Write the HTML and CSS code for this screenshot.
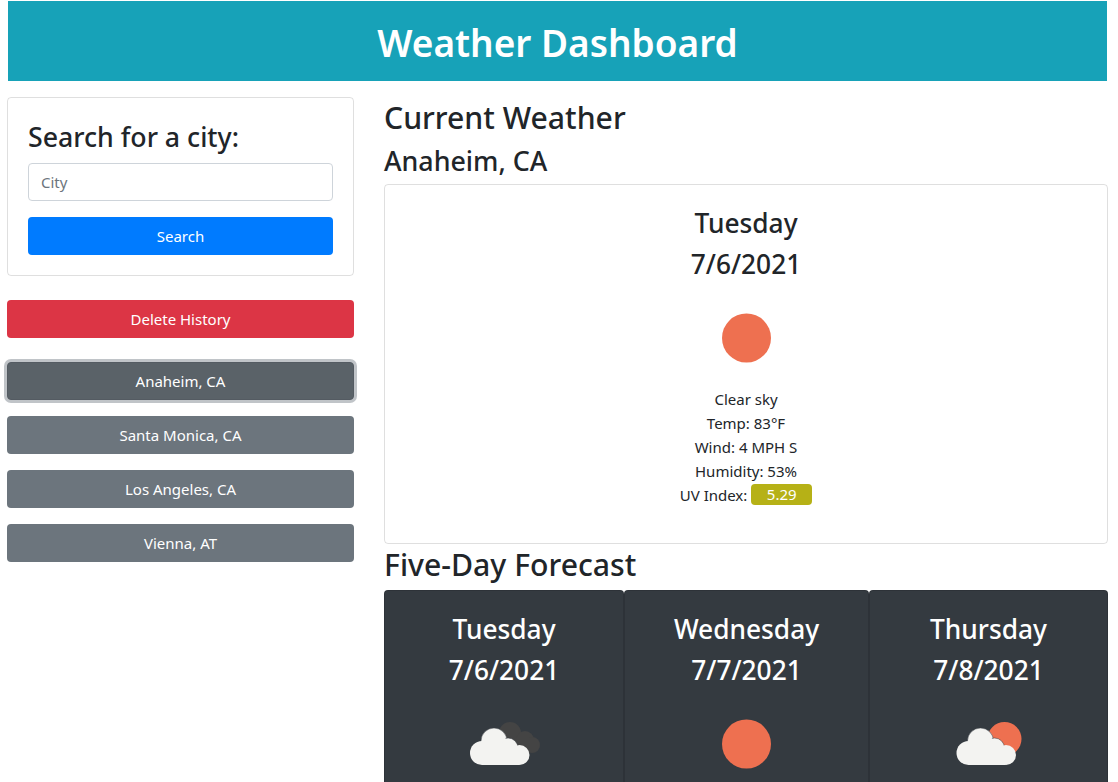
FILE: index.html
```html
<!DOCTYPE html>
<html lang="en">
<head>
  <meta charset="UTF-8">
  <title>Weather Dashboard</title>
  <link rel="stylesheet" href="styles.css">
</head>
<body>
  <header class="banner">
    <h1>Weather Dashboard</h1>
  </header>

  <div class="layout">
    <aside class="sidebar">
      <form class="search-card">
        <h3>Search for a city:</h3>
        <input type="text" class="city-input" placeholder="City">
        <button type="button" class="btn btn-blue">Search</button>
      </form>

      <button type="button" class="btn btn-red">Delete History</button>

      <div class="history">
        <button type="button" class="btn btn-grey is-focused">Anaheim, CA</button>
        <button type="button" class="btn btn-grey">Santa Monica, CA</button>
        <button type="button" class="btn btn-grey">Los Angeles, CA</button>
        <button type="button" class="btn btn-grey">Vienna, AT</button>
      </div>
    </aside>

    <main class="content">
      <h2 class="current-title">Current Weather</h2>
      <h3 class="city-name">Anaheim, CA</h3>
      <section class="weather-card">
        <h3>Tuesday</h3>
        <h3>7/6/2021</h3>
        <svg class="icon" viewBox="0 0 100 100">
          <circle cx="50.500" cy="50" r="24.5" fill="#ee7050"/>
        </svg>
        <p>Clear sky</p>
        <p>Temp: 83°F</p>
        <p>Wind: 4 MPH S</p>
        <p>Humidity: 53%</p>
        <p>UV Index: <span class="uv">5.29</span></p>
      </section>

      <h2>Five-Day Forecast</h2>
      <section class="forecast">
        <div class="weather-card dark">
          <h3>Tuesday</h3>
          <h3>7/6/2021</h3>
          <svg class="icon" viewBox="0 0 100 100">
            <g fill="#444444">
              <circle cx="56" cy="39" r="11"/>
              <circle cx="71" cy="46" r="9"/>
              <circle cx="78" cy="51" r="8"/>
              <rect x="56" y="44" width="20" height="15"/>
            </g>
            <g fill="#f3f3f1" stroke="#343a40" stroke-width="0.5">
              <circle cx="40" cy="47" r="13"/>
              <circle cx="54" cy="54" r="10"/>
            </g>
            <g fill="#f3f3f1">
              <circle cx="28" cy="59" r="12"/>
              <circle cx="40" cy="48" r="12"/>
              <circle cx="65.500" cy="61" r="10"/>
              <circle cx="54" cy="55" r="9"/>
              <rect x="28" y="56" width="37" height="15"/>
            </g>
          </svg>
        </div>
        <div class="weather-card dark">
          <h3>Wednesday</h3>
          <h3>7/7/2021</h3>
          <svg class="icon" viewBox="0 0 100 100">
            <circle cx="49.500" cy="50" r="24.5" fill="#ee7050"/>
          </svg>
        </div>
        <div class="weather-card dark">
          <h3>Thursday</h3>
          <h3>7/8/2021</h3>
          <svg class="icon" viewBox="0 0 100 100">
            <circle cx="65.500" cy="45" r="17" fill="#ee7050"/>
            <g fill="#f3f3f1" stroke="#343a40" stroke-width="0.5">
              <circle cx="41.500" cy="47" r="13"/>
              <circle cx="55.500" cy="54" r="10"/>
            </g>
            <g fill="#f3f3f1">
              <circle cx="29.500" cy="59" r="12"/>
              <circle cx="41.500" cy="48" r="12"/>
              <circle cx="67" cy="61" r="10"/>
              <circle cx="55.500" cy="55" r="9"/>
              <rect x="29.500" y="56" width="37" height="15"/>
            </g>
          </svg>
        </div>
      </section>
    </main>
  </div>
</body>
</html>
```

FILE: styles.css
```css
html, body {
  height: 100%;
  overflow: hidden;
}
body {
  margin: 0;
  padding: 1px 10px 0 7px;
  box-sizing: border-box;
  font-family: "Noto Sans", Arial, sans-serif;
  font-size: 15px;
  line-height: 24px;
  color: #212529;
  background: white;
}
h1, h2, h3, p {
  margin: 0;
}
h1 {
  font-size: 37px;
  line-height: 48px;
  font-weight: 600;
}
h2 {
  font-size: 30.200px;
  line-height: 38.4px;
  font-weight: 500;
  padding-top: 2px;
  margin-bottom: 6px;
}
h3 {
  font-size: 26.300px;
  line-height: 33.6px;
  font-weight: 500;
  margin-bottom: 7px;
}
.banner {
  margin: 0 1px 16px;
  padding: 18px 16px 14px;
  background: #17a2b8;
  color: white;
  text-align: center;
}
.layout {
  display: grid;
  grid-template-columns: 347px 724px;
  column-gap: 30px;
}
.sidebar {
  display: flex;
  flex-direction: column;
  gap: 24px;
}
.search-card {
  display: flex;
  flex-direction: column;
  padding: 20px;
  border: 1px solid rgba(0,0,0,0.125);
  border-radius: 4px;
}
.search-card h3 {
  font-size: 26.700px;
  margin-top: 2px;
  margin-bottom: 9px;
}
.city-input {
  height: 38px;
  box-sizing: border-box;
  margin-bottom: 16px;
  padding: 6px 12px;
  border: 1px solid #ced4da;
  border-radius: 4px;
  font: inherit;
}
.city-input::placeholder {
  color: #6c757d;
}
.btn {
  display: block;
  width: 100%;
  height: 38px;
  padding: 6px 12px;
  border: 1px solid transparent;
  border-radius: 4px;
  color: white;
  font: inherit;
  text-align: center;
  cursor: pointer;
}
.btn-blue {
  background: #007bff;
}
.btn-red {
  background: #dc3545;
}
.btn-grey {
  background: #6c757d;
}
.btn-grey.is-focused {
  background: #5a6268;
  border-color: #545b62;
  box-shadow: 0 0 0 3px rgba(130,138,145,0.5);
}
.history {
  display: flex;
  flex-direction: column;
  gap: 16px;
}
.content {
  margin-top: -1px;
}
.current-title {
  padding-top: 3px;
  margin-bottom: 5px;
}
.city-name {
  font-size: 26.800px;
  padding-top: 2px;
  margin-bottom: 6px;
}
.weather-card {
  height: 360px;
  box-sizing: border-box;
  padding: 22px 20px 20px;
  border: 1px solid rgba(0,0,0,0.125);
  border-radius: 4px;
  text-align: center;
}
.icon {
  display: block;
  width: 100px;
  height: 100px;
  margin: 0 auto -1px;
}
.uv {
  display: inline-block;
  width: 61px;
  height: 21px;
  line-height: 21px;
  border-radius: 4px;
  background: #b6b116;
  color: white;
  vertical-align: 1px;
}
.forecast {
  display: grid;
  grid-template-columns: 240px 245px 239px;
}
.dark {
  background: #343a40;
  color: white;
}
.dark .icon {
  margin-top: -1px;
}
```
